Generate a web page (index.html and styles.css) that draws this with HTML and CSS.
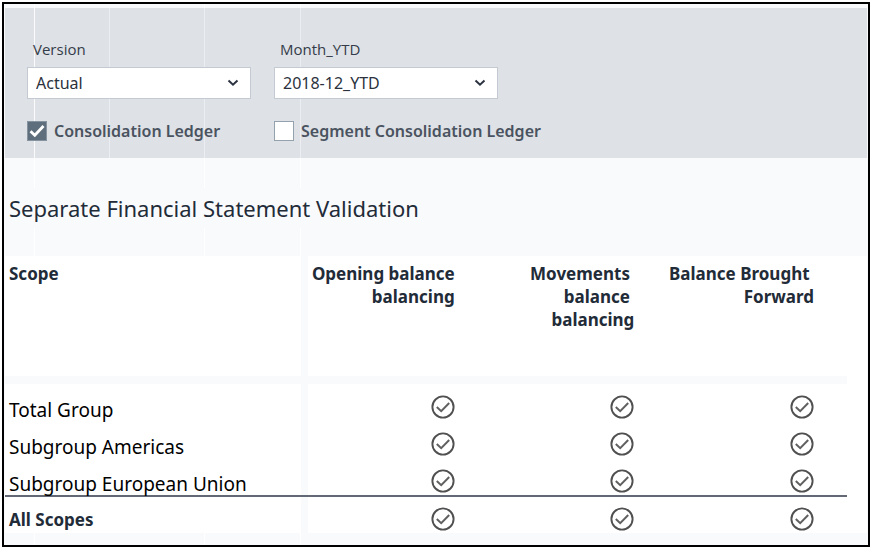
FILE: index.html
```html
<!DOCTYPE html>
<html lang="en">
<head>
<meta charset="utf-8">
<title>Separate Financial Statement Validation</title>
<link rel="stylesheet" href="styles.css">
</head>
<body>
<svg class="sprite" aria-hidden="true">
  <symbol id="ok" viewBox="0 0 24 24">
    <circle cx="12" cy="12" r="10.6" fill="none" stroke="#505050" stroke-width="1.9"/>
    <path d="M5.8 12 10.2 16.2 18.2 8" fill="none" stroke="#606060" stroke-width="2"/>
  </symbol>
</svg>
<main class="frame">
  <form class="filters">
    <div class="field">
      <label class="field-label" for="version">Version</label>
      <div class="select-box">
        <select id="version"><option>Actual</option></select>
        <svg class="chevron" viewBox="0 0 12 8" aria-hidden="true"><path d="M1.5 1.5 6 5.7 10.5 1.5"/></svg>
      </div>
      <label class="check"><input type="checkbox" checked><span>Consolidation Ledger</span></label>
    </div>
    <div class="field">
      <label class="field-label" for="month">Month_YTD</label>
      <div class="select-box">
        <select id="month"><option>2018-12_YTD</option></select>
        <svg class="chevron" viewBox="0 0 12 8" aria-hidden="true"><path d="M1.5 1.5 6 5.7 10.5 1.5"/></svg>
      </div>
      <label class="check"><input type="checkbox"><span>Segment Consolidation Ledger</span></label>
    </div>
  </form>
  <h1 class="title">Separate Financial Statement Validation</h1>
  <div class="sheet">
    <table class="grid">
      <thead>
        <tr>
          <th class="scope" scope="col">Scope</th>
          <th scope="col">Opening balance<br>balancing</th>
          <th scope="col">Movements&nbsp;<br>balance&nbsp;<br>balancing</th>
          <th scope="col">Balance Brought&nbsp;<br>Forward</th>
        </tr>
      </thead>
      <tbody>
        <tr>
          <td class="scope">Total Group</td>
          <td><svg class="ok" role="img" aria-label="Valid"><use href="#ok"/></svg></td>
          <td><svg class="ok" role="img" aria-label="Valid"><use href="#ok"/></svg></td>
          <td><svg class="ok" role="img" aria-label="Valid"><use href="#ok"/></svg></td>
        </tr>
        <tr>
          <td class="scope">Subgroup Americas</td>
          <td><svg class="ok" role="img" aria-label="Valid"><use href="#ok"/></svg></td>
          <td><svg class="ok" role="img" aria-label="Valid"><use href="#ok"/></svg></td>
          <td><svg class="ok" role="img" aria-label="Valid"><use href="#ok"/></svg></td>
        </tr>
        <tr>
          <td class="scope">Subgroup European Union</td>
          <td><svg class="ok" role="img" aria-label="Valid"><use href="#ok"/></svg></td>
          <td><svg class="ok" role="img" aria-label="Valid"><use href="#ok"/></svg></td>
          <td><svg class="ok" role="img" aria-label="Valid"><use href="#ok"/></svg></td>
        </tr>
      </tbody>
      <tfoot>
        <tr>
          <th class="scope" scope="row">All Scopes</th>
          <td><svg class="ok" role="img" aria-label="Valid"><use href="#ok"/></svg></td>
          <td><svg class="ok" role="img" aria-label="Valid"><use href="#ok"/></svg></td>
          <td><svg class="ok" role="img" aria-label="Valid"><use href="#ok"/></svg></td>
        </tr>
      </tfoot>
    </table>
  </div>
</main>
</body>
</html>
```
FILE: styles.css
```css
* { box-sizing: border-box; }

body {
  margin: 0;
  padding: 2px 3px 2px 2px;
  background: #fff;
  font-family: "Noto Sans", "Open Sans", sans-serif;
  color: #222b38;
}

.sprite { display: none; }

.frame {
  border: 2px solid #000;
  padding: 4px 1px 12px;
  background:
    linear-gradient(#fff, #fff) 30px 0 / 1px 100% no-repeat,
    linear-gradient(#fff, #fff) 200px 0 / 1px 100% no-repeat,
    linear-gradient(#fff, #fff) 296px 0 / 1px 100% no-repeat,
    #f9fafc;
}

.filters {
  display: flex;
  gap: 23px;
  padding: 29px 22px 15px;
  font-family: "Open Sans", sans-serif;
  background:
    linear-gradient(#fbfbfc, #fbfbfc) 29px 0 / 1px 100% no-repeat,
    linear-gradient(#eceef1, #eceef1) 104px 0 / 1px 100% no-repeat,
    linear-gradient(#eceef1, #eceef1) 199px 0 / 1px 100% no-repeat,
    linear-gradient(#eceef1, #eceef1) 295px 0 / 1px 100% no-repeat,
    #dee1e6;
}

.field {
  display: flex;
  flex-direction: column;
  align-items: flex-start;
}

.field-label {
  padding: 0 6px;
  margin-bottom: 6px;
  font-size: 15px;
  line-height: 24px;
  color: #343c49;
}

.select-box {
  display: grid;
  width: 224px;
  align-items: center;
}

.select-box select {
  grid-area: 1 / 1;
  appearance: none;
  width: 100%;
  height: 32px;
  padding: 0 8px;
  border: 1px solid #c3cad1;
  border-radius: 0;
  background: #fff;
  font: 16px "Noto Sans", sans-serif;
  color: #2b323d;
}

.chevron {
  grid-area: 1 / 1;
  justify-self: end;
  width: 12px;
  height: 8px;
  margin-right: 12px;
  pointer-events: none;
}

.chevron path {
  fill: none;
  stroke: #2b3340;
  stroke-width: 2;
}

.check {
  display: flex;
  align-items: center;
  gap: 7px;
  margin-top: 20px;
  font-family: "Noto Sans", sans-serif;
  font-size: 16px;
  font-weight: 600;
  line-height: 24px;
  color: #4a5360;
}

.check input {
  appearance: none;
  width: 20px;
  height: 20px;
  margin: 0;
  border: 1px solid #95a1ac;
  background: #fff;
}

.check input:checked {
  border: 1px solid #8593a0;
  background: #5f6e7d url("data:image/svg+xml,%3Csvg xmlns='http://www.w3.org/2000/svg' viewBox='0 0 18 18'%3E%3Cpath d='M2.5 9.2 6.8 13.2 15.5 4' fill='none' stroke='white' stroke-width='2.8'/%3E%3C/svg%3E") center / 18px no-repeat;
}

.title {
  margin: 30px 0 28px;
  padding: 0 4px;
  background: #f9fafc;
  font-size: 22px;
  font-weight: 400;
  line-height: 40px;
}

.sheet {
  padding-right: 20px;
  background: #fff;
}

.grid {
  width: 100%;
  table-layout: fixed;
  border-collapse: separate;
  border-spacing: 0;
}

.grid th,
.grid td {
  padding: 0 33px 0 0;
  text-align: right;
}

.grid .scope {
  width: 36%;
  padding: 0 0 0 4px;
  background: linear-gradient(#f9fafc, #f9fafc) right / 7px 100% no-repeat;
  text-align: left;
}

.grid thead th,
.grid thead .scope {
  height: 128px;
  padding-top: 6px;
  border-bottom: 8px solid #f9fafc;
  vertical-align: top;
  font-size: 17px;
  font-weight: 700;
  line-height: 23px;
  white-space: nowrap;
}

.grid tbody td,
.grid tfoot td,
.grid tfoot th {
  height: 37px;
  vertical-align: middle;
}

.grid tbody .scope {
  padding-top: 15px;
  font-size: 19px;
  line-height: 22px;
  color: #000;
}

.grid tfoot th,
.grid tfoot td {
  border-top: 2px solid #626975;
  height: 38px;
}

.grid tfoot .scope {
  padding-top: 10px;
  font-size: 17px;
  font-weight: 700;
  line-height: 24px;
}

.ok {
  display: block;
  width: 24px;
  height: 24px;
  margin: 11px 0 2px auto;
}

.grid tfoot .ok {
  margin: 10px 0 2px auto;
}
```
